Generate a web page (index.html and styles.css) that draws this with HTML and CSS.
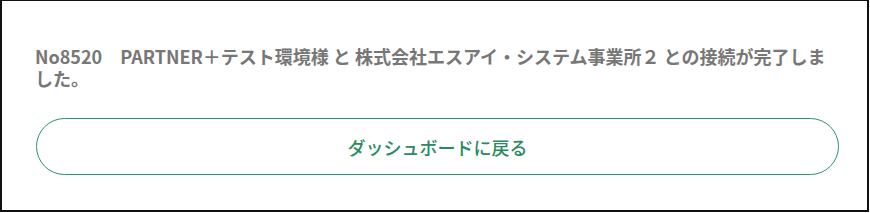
FILE: index.html
```html
<!DOCTYPE html>
<html lang="ja">
<head>
    <meta charset="UTF-8">
    <meta name="viewport" content="width=device-width, initial-scale=1.0">
    <title>接続完了</title>
    <link rel="stylesheet" href="styles.css">
</head>
<body>
    <div class="panel">
        <p class="message">No8520　PARTNER＋テスト環境様 と 株式会社エスアイ・システム事業所２ との接続が完了しました。</p>
        <a href="#" class="btn-back">ダッシュボードに戻る</a>
    </div>
</body>
</html>
```

FILE: styles.css
```css
body {
    margin: 0;
    background: #fff;
    font-family: "Noto Sans CJK JP", "Noto Sans", sans-serif;
}
.panel {
    box-sizing: border-box;
    width: 869px;
    height: 212px;
    border: 2px solid #111;
    border-top-width: 1px;
    padding: 44px 28px 0 33px;
}
.message {
    margin: 0;
    font-size: 18px;
    line-height: 22px;
    font-weight: 700;
    color: #777;
}
.btn-back {
    display: flex;
    justify-content: center;
    align-items: center;
    box-sizing: border-box;
    height: 57px;
    margin-top: 29px;
    margin-left: 1px;
    border: 1.5px solid #2e9466;
    border-radius: 29px;
    color: #2a8a5e;
    font-size: 18px;
    font-weight: 500;
    text-decoration: none;
}
```
